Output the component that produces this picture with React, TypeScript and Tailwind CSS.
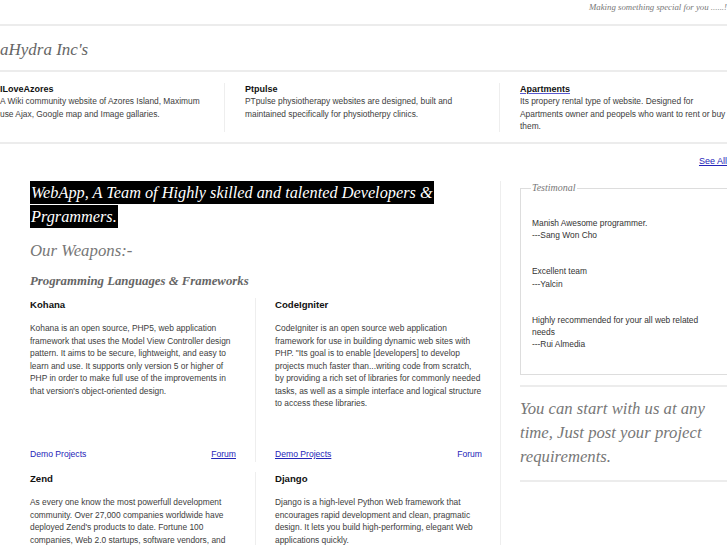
import React from "react";

const serif = "font-['Liberation_Serif',serif] italic";
const sans = "font-['Liberation_Sans',Arial,sans-serif]";

interface Project {
  name: string;
  text: string;
  link?: boolean;
}

const projects: Project[] = [
  {
    name: "ILoveAzores",
    text: "A Wiki community website of Azores Island, Maximum use Ajax, Google map and Image gallaries.",
  },
  {
    name: "Ptpulse",
    text: "PTpulse physiotherapy websites are designed, built and maintained specifically for physiotherpy clinics.",
  },
  {
    name: "Apartments",
    text: "Its propery rental type of website. Designed for Apartments owner and peopels who want to rent or buy them.",
    link: true,
  },
];

interface Weapon {
  name: string;
  text: string;
  demoUnderline?: boolean;
  forumUnderline?: boolean;
}

const weapons: Weapon[] = [
  {
    name: "Kohana",
    text: "Kohana is an open source, PHP5, web application framework that uses the Model View Controller design pattern. It aims to be secure, lightweight, and easy to learn and use. It supports only version 5 or higher of PHP in order to make full use of the improvements in that version's object-oriented design.",
    forumUnderline: true,
  },
  {
    name: "CodeIgniter",
    text: "CodeIgniter is an open source web application framework for use in building dynamic web sites with PHP. \"Its goal is to enable [developers] to develop projects much faster than...writing code from scratch, by providing a rich set of libraries for commonly needed tasks, as well as a simple interface and logical structure to access these libraries.",
    demoUnderline: true,
  },
  {
    name: "Zend",
    text: "As every one know the most powerfull development community. Over 27,000 companies worldwide have deployed Zend's products to date. Fortune 100 companies, Web 2.0 startups, software vendors, and many more.",
  },
  {
    name: "Django",
    text: "Django is a high-level Python Web framework that encourages rapid development and clean, pragmatic design. It lets you build high-performing, elegant Web applications quickly.",
  },
];

const testimonials = [
  { text: "Manish Awesome programmer.", by: "---Sang Won Cho" },
  { text: "Excellent team", by: "---Yalcin" },
  { text: "Highly recommended for your all web related needs", by: "---Rui Almedia" },
];

export default function App() {
  return (
    <div className={`${sans} w-[727px] h-[545px] overflow-hidden bg-white text-[#3d3d3d]`}>
      {/* tagline */}
      <div className="h-[26px] border-b-2 border-[#ececec] flex justify-end pt-[1px]">
        <span className={`${serif} text-[8.8px] text-[#777] leading-[12px] whitespace-nowrap`}>
          Making something special for you ......!
        </span>
      </div>

      {/* brand */}
      <div className="h-[46px] border-b-2 border-[#ececec] flex items-center">
        <h1 className={`${serif} text-[17px] text-[#666] leading-none pt-[2px]`}>aHydra Inc's</h1>
      </div>

      {/* projects */}
      <div className="flex pt-[11px] h-[72px] border-b-2 border-[#ececec]">
        {projects.map((p, i) => (
          <div
            key={p.name}
            className={
              i === 0
                ? "w-[225px] pr-[10px] border-r border-[#eee] h-[49px]"
                : i === 1
                ? "w-[275px] pl-[20px] pr-[10px] border-r border-[#eee] h-[49px]"
                : "w-[227px] pl-[20px] h-[49px]"
            }
          >
            <div
              className={`text-[9px] font-bold text-[#111] leading-[12px] ${
                p.link ? "underline decoration-[#5a5ad0]" : ""
              }`}
            >
              {p.name}
            </div>
            <p className="text-[8.4px] leading-[12.5px]">{p.text}</p>
          </div>
        ))}
      </div>

      <div className="flex justify-end pt-[11px] h-[37px]">
        <a className="text-[9px] leading-[12px] text-[#2424b8] underline whitespace-nowrap">See All</a>
      </div>

      {/* main */}
      <div className="flex">
        <div className="w-[500px] pl-[30px] pr-[10px]">
          <h2 className={`${serif} text-[16.3px] leading-[24px] text-white`}>
            <span className="bg-black box-decoration-clone px-[1px] py-[2px]">
              WebApp, A Team of Highly skilled and talented Developers & Prgrammers.
            </span>
          </h2>
          <h3 className={`${serif} text-[16.8px] leading-[24px] text-[#777] mt-[10px]`}>Our Weapons:-</h3>
          <h4 className={`${serif} font-bold text-[12.8px] leading-[16px] text-[#666] mt-[10px]`}>
            Programming Languages &amp; Frameworks
          </h4>

          <div className="grid grid-cols-[226px_226px] gap-y-[10px] mt-[9px]">
            {weapons.map((w, i) => (
              <div
                key={w.name}
                className={
                  i % 2 === 0
                    ? "pr-[19px] border-r border-[#eee] h-[164px] flex flex-col"
                    : "pl-[19px] h-[164px] flex flex-col"
                }
              >
                <div className="text-[9.6px] font-bold text-[#111] leading-[12px] pt-[1px]">{w.name}</div>
                <p className="text-[8.4px] leading-[12.5px] mt-[11px]">{w.text}</p>
                <div className="mt-auto mb-[2px] flex justify-between text-[8.6px] leading-[12px] text-[#2424b8]">
                  <a className={w.demoUnderline ? "underline" : ""}>Demo Projects</a>
                  <a className={w.forumUnderline ? "underline" : ""}>Forum</a>
                </div>
              </div>
            ))}
          </div>
        </div>

        {/* sidebar */}
        <div className="border-l border-[#eee] pl-[19px] w-[227px] pt-[1px]">
          <fieldset className="border border-[#ddd] h-[193px] pl-[11px] pr-[6px] pt-[23px] mr-[-1px]">
            <legend className={`${serif} text-[10px] text-[#777] leading-[12px] ml-[-1px] px-[1px]`}>
              Testimonal
            </legend>
            {testimonials.map((t) => (
              <div key={t.by} className="text-[8.4px] leading-[12.2px] text-[#333] mb-[24px]">
                <div>{t.text}</div>
                <div>{t.by}</div>
              </div>
            ))}
          </fieldset>
          <div className="border-t-2 border-[#ececec] mt-[10px] pt-[10px] pb-[11px] border-b-2">
            <p className={`${serif} text-[16.7px] leading-[24px] text-[#777]`}>
              You can start with us at any time, Just post your project requirements.
            </p>
          </div>
        </div>
      </div>
    </div>
  );
}
